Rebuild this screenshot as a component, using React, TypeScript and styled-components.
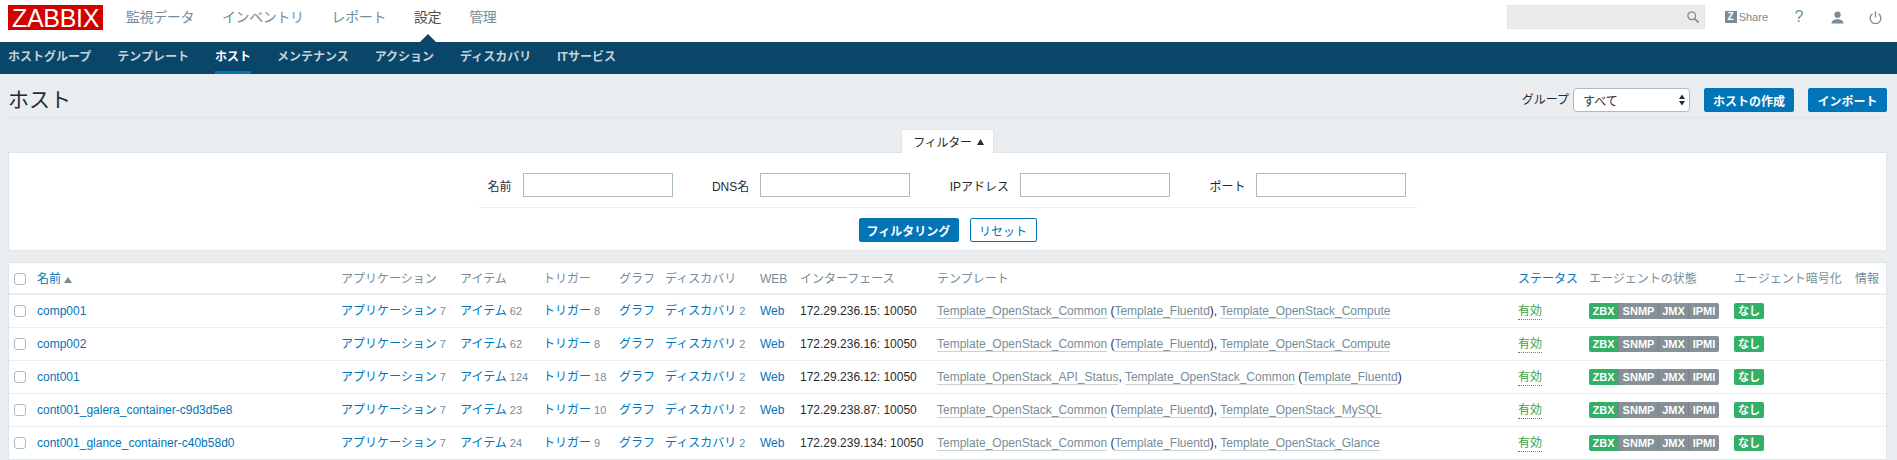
import styled, { createGlobalStyle } from "styled-components";

const GlobalStyle = createGlobalStyle`
  html, body {
    margin: 0;
    height: 460px;
    overflow: hidden;
    background: #ebeef0;
    font-family: "Liberation Sans", "Noto Sans CJK JP", sans-serif;
    font-size: 12px;
    color: #1f2c33;
  }
`;

const TopBar = styled.header`
  height: 42px;
  background: #fff;
  display: flex;
  align-items: flex-start;
  padding: 5px 15px 0 8px;
  box-sizing: border-box;
`;

const Logo = styled.div`
  width: 95px;
  height: 25px;
  background: #d40000;
  color: #fff;
  font-size: 25px;
  line-height: 26px;
  text-align: center;
  letter-spacing: -0.3px;
  margin-right: 9px;
`;

const MainNav = styled.nav`
  display: flex;
  height: 37px;
  align-items: flex-start;
`;

const MainItem = styled.a<{ $active?: boolean }>`
  position: relative;
  font-size: 14px;
  letter-spacing: -0.4px;
  line-height: 20px;
  height: 37px;
  padding: 2px 14px 0;
  box-sizing: border-box;
  color: ${(p) => (p.$active ? "#4f4f4f" : "#768d99")};

  ${(p) =>
    p.$active &&
    `&::after {
      content: "";
      position: absolute;
      left: 50%;
      bottom: 0;
      margin-left: -8px;
      border-left: 8px solid transparent;
      border-right: 8px solid transparent;
      border-bottom: 8px solid #0a466a;
    }`}
`;

const TopRight = styled.div`
  margin-left: auto;
  display: flex;
  align-items: center;
  height: 24px;
`;

const SearchBox = styled.div`
  width: 198px;
  height: 24px;
  box-sizing: border-box;
  background: #ebebeb;
  border: 1px solid #e3e3e3;
  display: flex;
  align-items: center;
  justify-content: flex-end;
  padding-right: 5px;
  margin-right: 20px;
`;

const ShareLink = styled.a`
  display: flex;
  align-items: center;
  color: #768d99;
  font-size: 11px;
  margin-right: 26px;
`;

const ShareZ = styled.span`
  width: 12px;
  height: 12px;
  background: #768d99;
  color: #fff;
  font-size: 10px;
  font-weight: 700;
  line-height: 12px;
  text-align: center;
  margin-right: 2px;
`;

const HelpLink = styled.a`
  color: #768d99;
  font-size: 16px;
  width: 10px;
  text-align: center;
  margin-right: 27px;
`;

const IconLink = styled.a<{ $gap?: number }>`
  display: flex;
  color: #768d99;
  margin-right: ${(p) => p.$gap ?? 0}px;
`;

const SubNav = styled.nav`
  height: 32px;
  background: #0a466a;
  display: flex;
  padding-left: 8px;
`;

const SubItem = styled.a<{ $active?: boolean }>`
  height: 32px;
  box-sizing: border-box;
  margin-right: 26px;
  line-height: 30px;
  font-size: 12px;
  font-weight: 700;
  color: ${(p) => (p.$active ? "#fff" : "#c5d3da")};
  border-bottom: 3px solid ${(p) => (p.$active ? "#0275b8" : "transparent")};
`;

const Page = styled.main`
  padding: 0 10px 0 8px;
`;

const TitleRow = styled.div`
  height: 29px;
  padding-top: 14px;
  display: flex;
  align-items: flex-start;
  border-bottom: 1px solid #dfe4e7;
  box-sizing: content-box;
`;

const Title = styled.h1`
  margin: 0;
  font-size: 21px;
  font-weight: 400;
  line-height: 24px;
  color: #1f2c33;
`;

const GroupLabel = styled.span`
  margin-left: auto;
  margin-right: 4px;
  line-height: 24px;
`;

const GroupSelect = styled.div`
  width: 117px;
  height: 24px;
  box-sizing: border-box;
  background: #fff;
  border: 1px solid #acbbc2;
  border-radius: 4px;
  display: flex;
  align-items: center;
  justify-content: space-between;
  padding: 0 4px 0 9px;
  margin-right: 14px;
`;

const Button = styled.button<{ $width: number; $outline?: boolean }>`
  width: ${(p) => p.$width}px;
  height: 24px;
  padding: 0;
  border: 1px solid #0275b8;
  border-radius: 2px;
  background: ${(p) => (p.$outline ? "#fff" : "#0275b8")};
  color: ${(p) => (p.$outline ? "#0275b8" : "#fff")};
  font-family: inherit;
  font-size: 12px;
  font-weight: ${(p) => (p.$outline ? 400 : 700)};
`;

const HeaderButton = styled(Button)`
  & + & {
    margin-left: 14px;
  }
`;

const TabRow = styled.div`
  display: flex;
  justify-content: center;
  height: 34px;
  align-items: flex-end;
`;

const FilterTab = styled.div`
  width: 93px;
  height: 24px;
  box-sizing: border-box;
  background: #fff;
  border: 1px solid #dfe4e7;
  border-bottom: none;
  display: flex;
  align-items: center;
  justify-content: center;
  gap: 5px;
  letter-spacing: -0.3px;
  padding-left: 2px;
  margin-bottom: -1px;
  position: relative;
`;

const FilterPanel = styled.section`
  height: 99px;
  box-sizing: border-box;
  background: #fff;
  border: 1px solid #dfe4e7;
  padding-top: 20px;
  margin-bottom: 11px;
`;

const FilterFields = styled.div`
  width: 938px;
  margin: 0 auto;
  padding: 0 10px 10px 9px;
  border-bottom: 1px solid #ebeef0;
  display: flex;
  justify-content: space-between;
  box-sizing: border-box;
`;

const Field = styled.label`
  display: flex;
  align-items: center;
  gap: 11px;
  white-space: nowrap;
`;

const Input = styled.input`
  width: 150px;
  height: 24px;
  box-sizing: border-box;
  border: 1px solid #acbbc2;
  background: #fff;
  padding: 0 4px;
`;

const FilterActions = styled.div`
  display: flex;
  justify-content: center;
  gap: 11px;
  margin-top: 10px;
`;

const HostTable = styled.table`
  width: 1879px;
  table-layout: fixed;
  border-collapse: collapse;
  background: #fff;
  outline: 1px solid #dfe4e7;
  outline-offset: -1px;
`;

const HeadCell = styled.th<{ $link?: boolean }>`
  height: 32px;
  box-sizing: border-box;
  padding: 2px 5px 0;
  text-align: left;
  font-weight: 400;
  line-height: 16px;
  white-space: nowrap;
  color: ${(p) => (p.$link ? "#0275b8" : "#768d99")};
  border-bottom: 2px solid #ebeef0;
`;

const Cell = styled.td`
  height: 32px;
  padding: 0 5px;
  line-height: 16px;
  white-space: nowrap;
  border-bottom: 1px solid #ebeef0;
`;

const Check = styled.span`
  display: block;
  width: 12px;
  height: 12px;
  box-sizing: border-box;
  border: 1px solid #acbbc2;
  border-radius: 3px;
  margin-left: 1px;
  background: #fff;
`;

const LinkText = styled.a`
  color: #0275b8;
`;

const Count = styled.sup`
  vertical-align: baseline;
  font-size: 11px;
  line-height: 0;
  color: #768d99;
  margin-left: 3px;
`;

const TemplateLink = styled.a`
  color: #768d99;
  border-bottom: 1px solid #c9d2d7;
`;

const Enabled = styled.a`
  color: #429e47;
  padding-bottom: 1px;
  border-bottom: 1px dotted #429e47;
`;

const BadgeGroup = styled.div`
  display: flex;
`;

const Badge = styled.span<{ $width: number; $on?: boolean; $first?: boolean; $last?: boolean }>`
  width: ${(p) => p.$width}px;
  height: 16px;
  box-sizing: border-box;
  text-align: center;
  line-height: 16px;
  font-size: 11px;
  font-weight: 700;
  color: #fff;
  background: ${(p) => (p.$on ? "#34af67" : "#859097")};
  border-left: ${(p) => (p.$first ? "none" : "1px solid #7a858b")};
  border-radius: ${(p) => (p.$first ? "2px 0 0 2px" : p.$last ? "0 2px 2px 0" : "0")};
`;

const EncBadge = styled.span`
  display: block;
  width: 30px;
  height: 16px;
  line-height: 16px;
  text-align: center;
  font-size: 11px;
  font-weight: 700;
  color: #fff;
  background: #34af67;
  border-radius: 2px;
`;

const subItems = ["ホストグループ", "テンプレート", "ホスト", "メンテナンス", "アクション", "ディスカバリ", "ITサービス"];
const mainItems = ["監視データ", "インベントリ", "レポート", "設定", "管理"];
const colWidths = [24, 304, 119, 83, 76, 46, 95, 40, 137, 581, 71, 145, 121, 37];

const Common = "Template_OpenStack_Common";
const Fluentd = "Template_Fluentd";

type Host = {
  name: string;
  items: number;
  triggers: number;
  iface: string;
  last: string;
  apiFirst?: boolean;
};

const hosts: Host[] = [
  { name: "comp001", items: 62, triggers: 8, iface: "172.29.236.15: 10050", last: "Template_OpenStack_Compute" },
  { name: "comp002", items: 62, triggers: 8, iface: "172.29.236.16: 10050", last: "Template_OpenStack_Compute" },
  { name: "cont001", items: 124, triggers: 18, iface: "172.29.236.12: 10050", last: "Template_OpenStack_API_Status", apiFirst: true },
  { name: "cont001_galera_container-c9d3d5e8", items: 23, triggers: 10, iface: "172.29.238.87: 10050", last: "Template_OpenStack_MySQL" },
  { name: "cont001_glance_container-c40b58d0", items: 24, triggers: 9, iface: "172.29.239.134: 10050", last: "Template_OpenStack_Glance" },
];

const Templates = ({ host }: { host: Host }) =>
  host.apiFirst ? (
    <>
      <TemplateLink>{host.last}</TemplateLink>, <TemplateLink>{Common}</TemplateLink> (
      <TemplateLink>{Fluentd}</TemplateLink>)
    </>
  ) : (
    <>
      <TemplateLink>{Common}</TemplateLink> (<TemplateLink>{Fluentd}</TemplateLink>),{" "}
      <TemplateLink>{host.last}</TemplateLink>
    </>
  );

const App = () => {
  return (
    <>
      <GlobalStyle />
      <TopBar>
        <Logo>ZABBIX</Logo>
        <MainNav>
          {mainItems.map((item) => (
            <MainItem key={item} $active={item === "設定"}>
              {item}
            </MainItem>
          ))}
        </MainNav>
        <TopRight>
          <SearchBox>
            <svg width="12" height="12" viewBox="0 0 14 14" fill="none" stroke="#768d99" strokeWidth="1.5">
              <circle cx="5.5" cy="5.5" r="4.5" />
              <path d="M8.8 8.8 L13.5 13.5" strokeWidth="2" />
            </svg>
          </SearchBox>
          <ShareLink>
            <ShareZ>Z</ShareZ>Share
          </ShareLink>
          <HelpLink>?</HelpLink>
          <IconLink $gap={25}>
            <svg width="13" height="13" viewBox="0 0 14 14" fill="currentColor">
              <circle cx="7" cy="4" r="3.4" />
              <path d="M0.5 13.5 C0.5 9.8 4 8.8 7 8.8 C10 8.8 13.5 9.8 13.5 13.5 Z" />
            </svg>
          </IconLink>
          <IconLink>
            <svg width="13" height="13" viewBox="0 0 14 14" fill="none" stroke="currentColor" strokeWidth="1.4">
              <path d="M3.8 3 A5.8 5.8 0 1 0 10.2 3" />
              <path d="M7 0.3 V6.8" />
            </svg>
          </IconLink>
        </TopRight>
      </TopBar>
      <SubNav>
        {subItems.map((item) => (
          <SubItem key={item} $active={item === "ホスト"}>
            {item}
          </SubItem>
        ))}
      </SubNav>
      <Page>
        <TitleRow>
          <Title>ホスト</Title>
          <GroupLabel>グループ</GroupLabel>
          <GroupSelect>
            すべて
            <svg width="6" height="12" viewBox="0 0 6 12" fill="#1f2c33">
              <path d="M3 0.5 L6 5 H0 Z M3 11.5 L0 7 H6 Z" />
            </svg>
          </GroupSelect>
          <HeaderButton $width={90}>ホストの作成</HeaderButton>
          <HeaderButton $width={79}>インポート</HeaderButton>
        </TitleRow>
        <TabRow>
          <FilterTab>
            フィルター
            <svg width="7" height="6" viewBox="0 0 7 6" fill="#1f2c33">
              <path d="M3.5 0 L7 6 H0 Z" />
            </svg>
          </FilterTab>
        </TabRow>
        <FilterPanel>
          <FilterFields>
            <Field>
              名前
              <Input />
            </Field>
            <Field>
              DNS名
              <Input />
            </Field>
            <Field>
              IPアドレス
              <Input />
            </Field>
            <Field>
              ポート
              <Input />
            </Field>
          </FilterFields>
          <FilterActions>
            <Button $width={100}>フィルタリング</Button>
            <Button $width={67} $outline>
              リセット
            </Button>
          </FilterActions>
        </FilterPanel>
        <HostTable>
          <colgroup>
            {colWidths.map((w, i) => (
              <col key={i} width={w} />
            ))}
          </colgroup>
          <thead>
            <tr>
              <HeadCell>
                <Check />
              </HeadCell>
              <HeadCell $link>
                名前{" "}
                <svg width="8" height="6" viewBox="0 0 8 6" fill="#768d99">
                  <path d="M4 0 L8 6 H0 Z" />
                </svg>
              </HeadCell>
              <HeadCell>アプリケーション</HeadCell>
              <HeadCell>アイテム</HeadCell>
              <HeadCell>トリガー</HeadCell>
              <HeadCell>グラフ</HeadCell>
              <HeadCell>ディスカバリ</HeadCell>
              <HeadCell>WEB</HeadCell>
              <HeadCell>インターフェース</HeadCell>
              <HeadCell>テンプレート</HeadCell>
              <HeadCell $link>ステータス</HeadCell>
              <HeadCell>エージェントの状態</HeadCell>
              <HeadCell>エージェント暗号化</HeadCell>
              <HeadCell>情報</HeadCell>
            </tr>
          </thead>
          <tbody>
            {hosts.map((host) => (
              <tr key={host.name}>
                <Cell>
                  <Check />
                </Cell>
                <Cell>
                  <LinkText>{host.name}</LinkText>
                </Cell>
                <Cell>
                  <LinkText>アプリケーション</LinkText>
                  <Count>7</Count>
                </Cell>
                <Cell>
                  <LinkText>アイテム</LinkText>
                  <Count>{host.items}</Count>
                </Cell>
                <Cell>
                  <LinkText>トリガー</LinkText>
                  <Count>{host.triggers}</Count>
                </Cell>
                <Cell>
                  <LinkText>グラフ</LinkText>
                </Cell>
                <Cell>
                  <LinkText>ディスカバリ</LinkText>
                  <Count>2</Count>
                </Cell>
                <Cell>
                  <LinkText>Web</LinkText>
                </Cell>
                <Cell>{host.iface}</Cell>
                <Cell>
                  <Templates host={host} />
                </Cell>
                <Cell>
                  <Enabled>有効</Enabled>
                </Cell>
                <Cell>
                  <BadgeGroup>
                    <Badge $width={29} $on $first>
                      ZBX
                    </Badge>
                    <Badge $width={40}>SNMP</Badge>
                    <Badge $width={30}>JMX</Badge>
                    <Badge $width={31} $last>
                      IPMI
                    </Badge>
                  </BadgeGroup>
                </Cell>
                <Cell>
                  <EncBadge>なし</EncBadge>
                </Cell>
                <Cell />
              </tr>
            ))}
          </tbody>
        </HostTable>
      </Page>
    </>
  );
};

export default App;
